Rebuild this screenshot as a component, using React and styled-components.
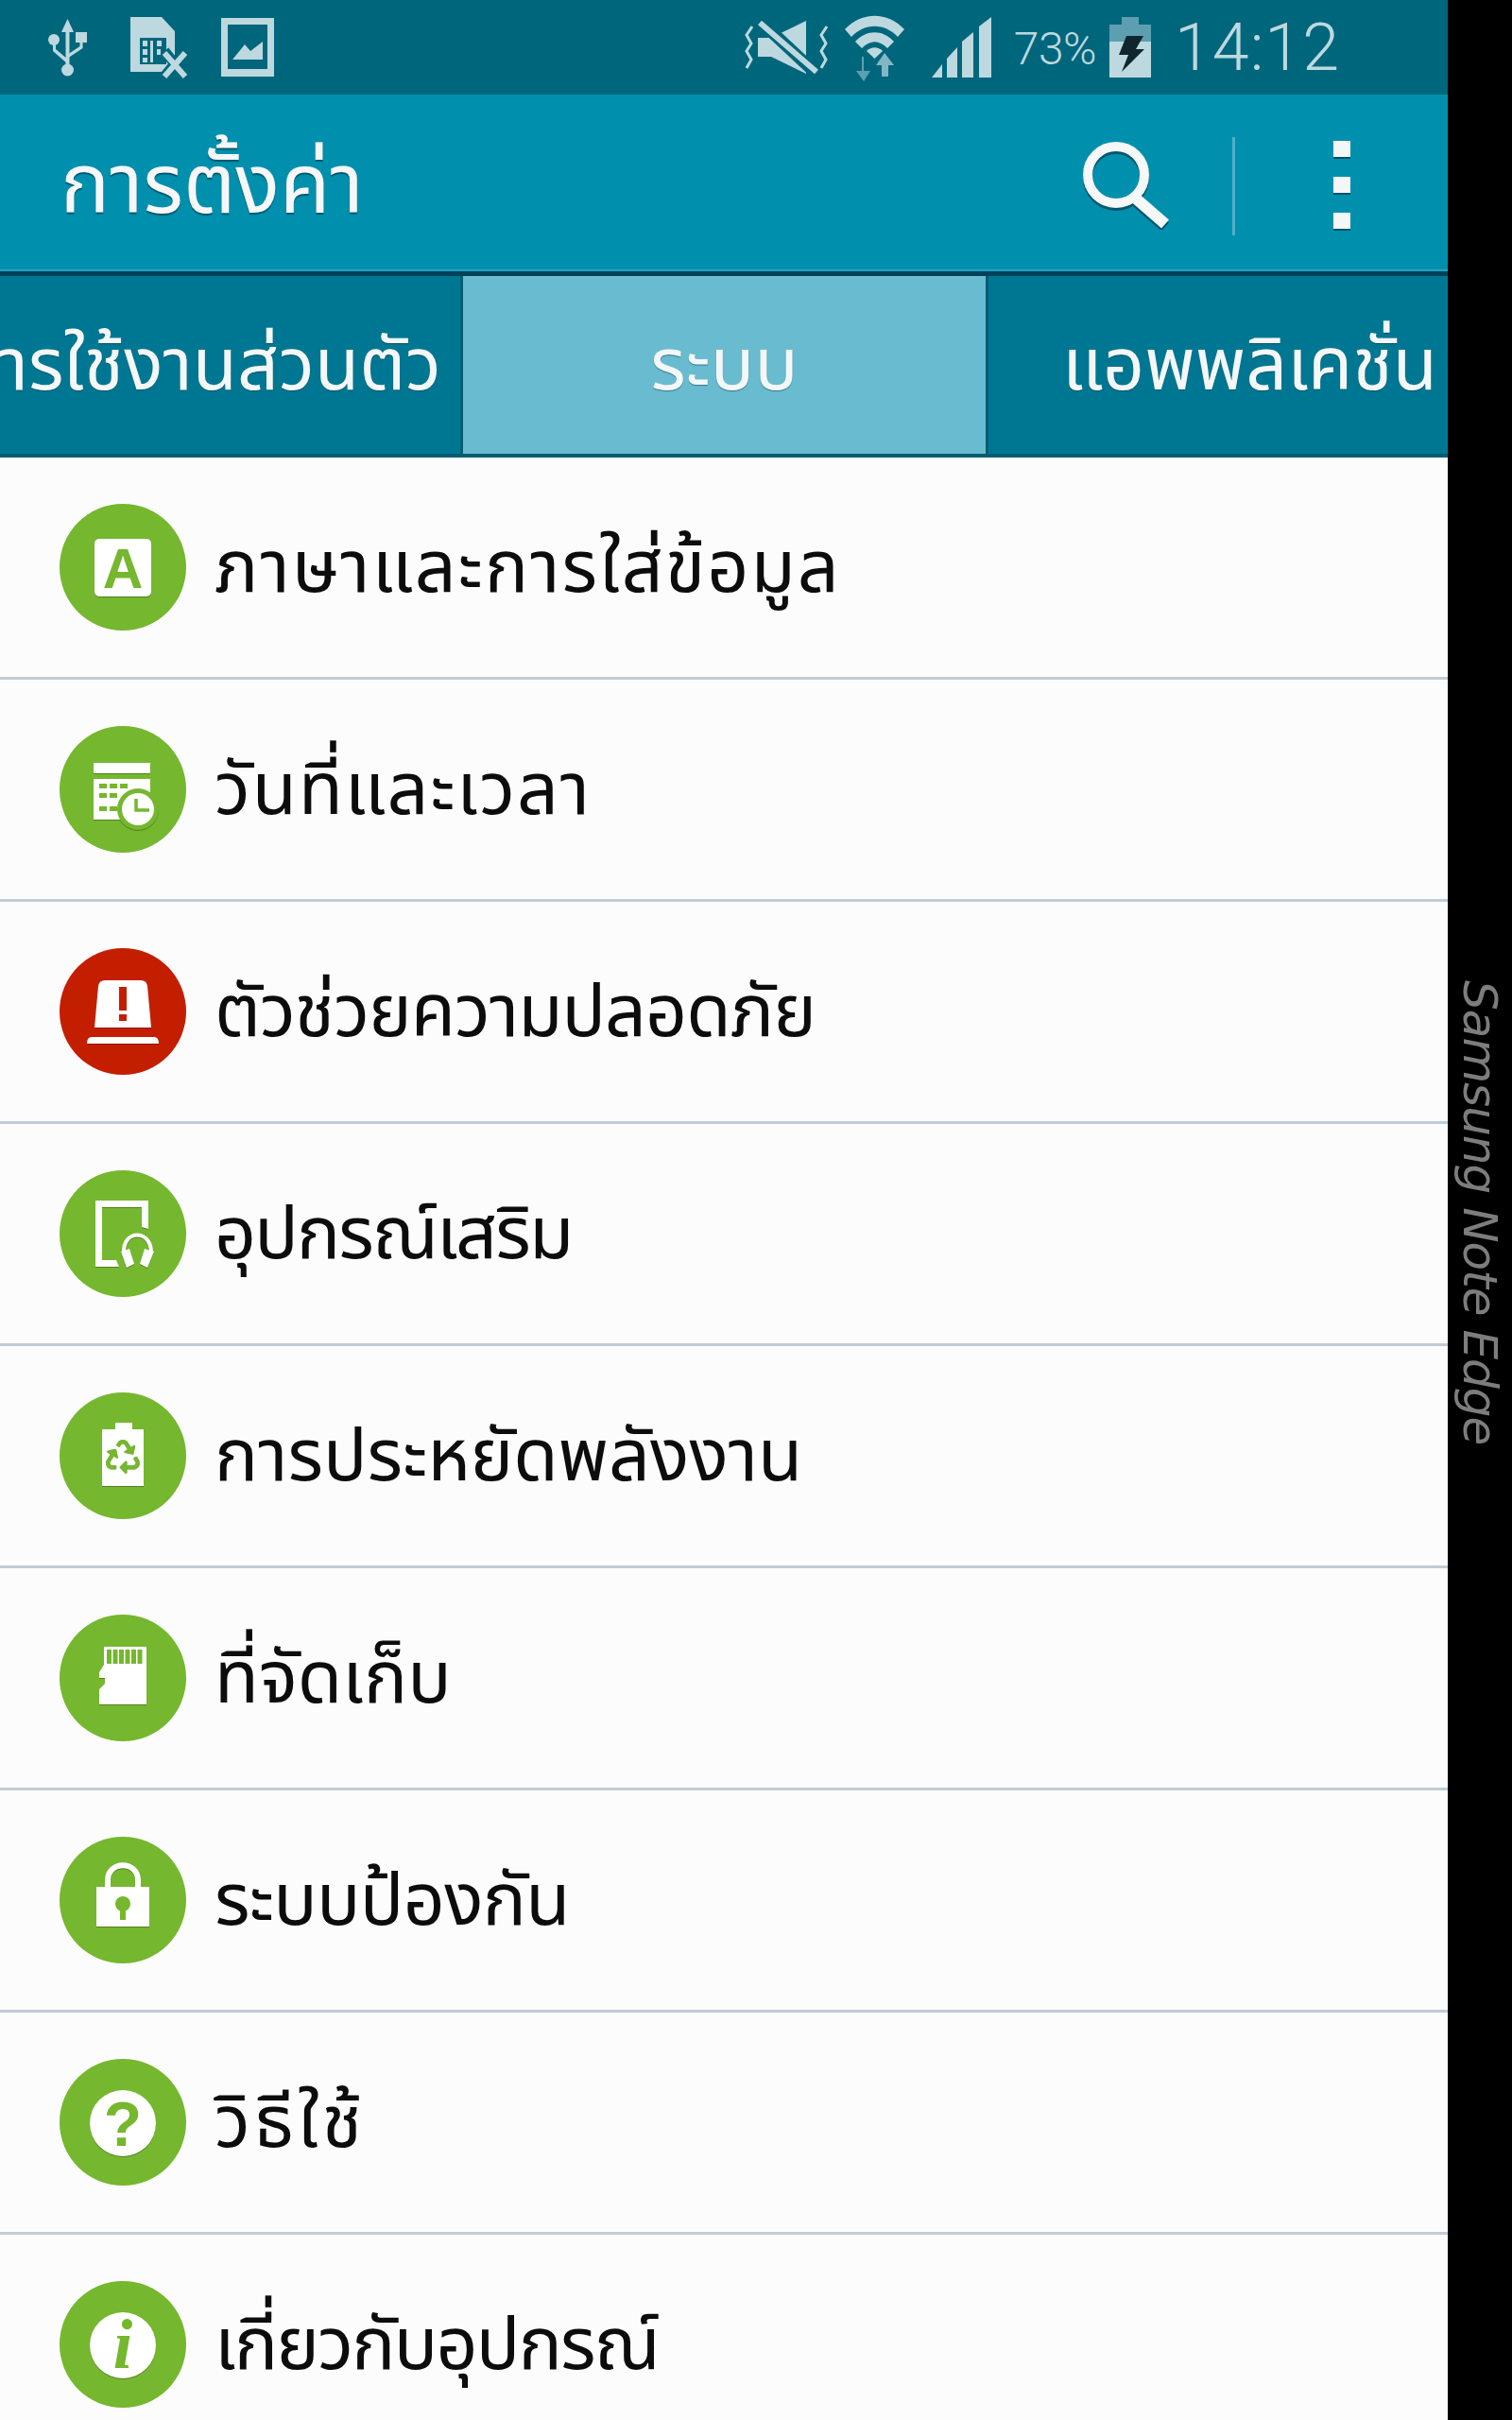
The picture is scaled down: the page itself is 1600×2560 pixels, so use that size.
import React from 'react'
import styled, { createGlobalStyle } from 'styled-components'
import { FaRecycle } from 'react-icons/fa'

const GlobalStyle = createGlobalStyle`
  html, body {
    margin: 0;
    padding: 0;
    background: #000;
  }
`

const THAI = `'Noto Sans Thai', 'Noto Sans', 'DejaVu Sans', sans-serif`
const LIGHT = '#bdd8df'
const STATUS_BG = '#00667c'
const BAR_BG = '#0090ae'
const TAB_BG = '#007792'
const GREEN = '#75b72e'
const RED = '#c41e00'

const Screen = styled.div`
  width: 1600px;
  height: 2560px;
  display: flex;
  overflow: hidden;
  background: #000;
`

const Phone = styled.main`
  width: 1532px;
  display: flex;
  flex-direction: column;
  background: #fcfcfc;
`

const StatusBar = styled.header`
  height: 100px;
  flex: none;
  display: flex;
  align-items: center;
  background: ${STATUS_BG};
  padding: 0 114px 0 51px;
  box-sizing: border-box;
`

const StatusLeft = styled.div`
  display: flex;
  align-items: center;
`

const StatusRight = styled.div`
  display: flex;
  align-items: center;
  margin-left: auto;
`

const Spacer = styled.span`
  width: ${p => p.$width}px;
`

const Percent = styled.span`
  font: 300 48px/1 Roboto, sans-serif;
  letter-spacing: -0.5px;
  color: ${LIGHT};
  margin: 4px 14px 0 24px;
`

const Clock = styled.span`
  font: 300 70px/1 Roboto, sans-serif;
  letter-spacing: 1px;
  color: ${LIGHT};
  margin-left: 25px;
`

const ActionBar = styled.div`
  height: 192px;
  flex: none;
  display: flex;
  align-items: center;
  box-sizing: border-box;
  background: ${BAR_BG};
  border-bottom: 5px solid #00415a;
  box-shadow: inset 0 -2px 0 #26a3bf;
  padding: 6px 103px 0 64px;
`

const Title = styled.h1`
  margin: 4px 0 0;
  font: 400 87px/1 ${THAI};
  color: #f5f7f8;
  text-shadow: 0 2px 1px rgba(0, 50, 65, 0.6);
`

const Actions = styled.div`
  margin-left: auto;
  display: flex;
  align-items: center;
`

const ActionDivider = styled.span`
  width: 3px;
  height: 104px;
  background: #4fb0c7;
  margin: 0 104px 0 67px;
`

const Dots = styled.div`
  display: flex;
  flex-direction: column;
  gap: 19px;
`

const Dot = styled.span`
  width: 18px;
  height: 17px;
  background: #f4f6f7;
  border-bottom: 2px solid #00536a;
`

const Tabs = styled.nav`
  height: 192px;
  flex: none;
  display: flex;
  background: ${TAB_BG};
  overflow: hidden;
`

const Tab = styled.div`
  width: ${p => p.$width}px;
  flex: none;
  box-sizing: border-box;
  display: flex;
  align-items: center;
  justify-content: ${p => p.$align};
  overflow: hidden;
  white-space: nowrap;
  font: 400 77px/1 ${THAI};
  color: #f3f7f8;
  text-shadow: 0 1px 1px rgba(0, 50, 65, 0.5);
  background: ${p => (p.$active ? '#69bccf' : TAB_BG)};
  border-bottom: 4px solid #005d72;
  padding: ${p => p.$padding};
  border-left: ${p => (p.$active ? '3px solid #005d72' : '0')};
  border-right: ${p => (p.$active ? '3px solid #005d72' : '0')};
`

const List = styled.ul`
  list-style: none;
  margin: 0;
  padding: 0;
`

const Row = styled.li`
  height: 235px;
  box-sizing: border-box;
  display: flex;
  align-items: center;
  gap: 30px;
  padding-left: 63px;
  border-bottom: 3px solid #c0ccd6;
`

const Badge = styled.span`
  width: 134px;
  height: 134px;
  flex: none;
  border-radius: 50%;
  background: ${p => (p.$alert ? RED : GREEN)};
  display: block;

  svg {
    display: block;
    filter: drop-shadow(0 1px 0 rgba(0, 0, 0, 0.3));
  }
`

const Label = styled.span`
  font: 400 77px/1 ${THAI};
  letter-spacing: ${p => p.$tracking}px;
  color: #0c0c0c;
  padding-top: 4px;
`

const Edge = styled.aside`
  flex: 1;
  padding-top: 1037px;
  display: flex;
  justify-content: center;
`

const EdgeText = styled.span`
  writing-mode: vertical-rl;
  font: italic 300 50px/1 'DejaVu Sans', sans-serif;
  letter-spacing: -1px;
  color: #7d7d7d;
  height: 486px;
  white-space: nowrap;
`

const UsbIcon = () => (
  <svg width="41" height="61" viewBox="0 0 41 61" fill={LIGHT}>
    <path d="M20.5 0 27 14H22.5V48H18.5V14H14Z" />
    <circle cx="20.5" cy="54" r="6.5" />
    <circle cx="6" cy="22" r="6" />
    <rect x="29" y="14" width="12" height="11" />
    <path d="M5 26H8V32L21 43V48L5 34Z" />
    <path d="M33.5 24H36.5V31L20 42V38L33.5 29Z" />
  </svg>
)

const SimOffIcon = () => (
  <svg width="61" height="65" viewBox="0 0 61 65">
    <path d="M0 0H33L47 15V58H0Z" fill={LIGHT} />
    <rect x="10" y="22" width="28" height="28" fill={STATUS_BG} />
    <g fill={LIGHT}>
      <rect x="13" y="25" width="5" height="6" />
      <rect x="13" y="34" width="5" height="6" />
      <rect x="13" y="43" width="5" height="5" />
      <rect x="21" y="25" width="3" height="23" />
      <rect x="28" y="25" width="5" height="6" />
      <rect x="28" y="34" width="4" height="6" />
    </g>
    <path d="M36 36 58 63M58 36 36 63" stroke={STATUS_BG} strokeWidth="11" />
    <path d="M36 38 58 63M58 38 36 63" stroke={LIGHT} strokeWidth="6" />
  </svg>
)

const ImageIcon = () => (
  <svg width="56" height="62" viewBox="0 0 56 62">
    <rect width="56" height="62" fill={LIGHT} />
    <rect x="7" y="7" width="42" height="47" fill={STATUS_BG} />
    <path d="M12 44 25 28 31 35 44 25V44Z" fill={LIGHT} />
  </svg>
)

const VibrateIcon = () => (
  <svg width="91" height="60" viewBox="0 0 91 60" fill="none">
    <path d="M8 8 2 17 7 26 2 34 7 43 2 52" stroke={LIGHT} strokeWidth="3" />
    <path d="M87 8 81 17 86 26 81 34 86 43 81 52" stroke={LIGHT} strokeWidth="3" />
    <path d="M14 20H28L65 2V58L28 40H14Z" fill={LIGHT} />
    <path d="M16 2 76 58" stroke={STATUS_BG} strokeWidth="13" />
    <path d="M16 4 76 56" stroke={LIGHT} strokeWidth="6" />
  </svg>
)

const WifiIcon = () => (
  <svg width="67" height="71" viewBox="0 0 67 71" fill="none">
    <path d="M2 16C20-3 47-3 65 16L58 24C44 9 23 9 9 24Z" fill={LIGHT} />
    <path d="M13 29C25 16 42 16 54 29L47 36C38 27 29 27 20 36Z" fill={LIGHT} />
    <path d="M25 39C30 34 37 34 42 39L33.500 47Z" fill={LIGHT} />
    <path d="M22 45V60H29L22 71 14 60H20V45Z" fill="#5d9fb0" />
    <path d="M44 41 54 54H48V66H41V54H35Z" fill="#83b6c4" />
  </svg>
)

const SignalIcon = () => (
  <svg width="63" height="64" viewBox="0 0 63 64" fill={LIGHT}>
    <path d="M0 64 11 50V64Z" />
    <path d="M16 64V44L27 32V64Z" />
    <path d="M32 64V26L44 16V64Z" />
    <path d="M50 64V10L63 0V64Z" />
  </svg>
)

const BatteryIcon = () => (
  <svg width="44" height="64" viewBox="0 0 44 64">
    <rect x="13" width="18" height="8" fill="#5d9fb0" />
    <rect y="8" width="44" height="18" fill="#5d9fb0" />
    <rect y="26" width="44" height="38" fill={LIGHT} />
    <path d="M18 20H36L28 34H37L13 58 20 40H10Z" fill="#10262f" />
  </svg>
)

const SearchIcon = () => (
  <svg width="91" height="93" viewBox="0 0 91 93" fill="none">
    <g stroke="#00566c" transform="translate(0 3)">
      <ellipse cx="35" cy="35" rx="30" ry="30" strokeWidth="10" />
      <path d="M56 60 87 87" strokeWidth="12" />
    </g>
    <ellipse cx="35" cy="35" rx="30" ry="30" stroke="#f5f7f8" strokeWidth="10" />
    <path d="M56 60 87 87" stroke="#f5f7f8" strokeWidth="12" />
  </svg>
)

const Glyph = styled.text`
  font-family: ${p => p.$family};
  font-size: ${p => p.$size}px;
  font-weight: 700;
  font-style: ${p => p.$style || 'normal'};
  fill: ${GREEN};
  text-anchor: middle;
`

const iconProps = { width: 134, height: 134, viewBox: '0 0 134 134', fill: '#fff' }

const LanguageIcon = () => (
  <svg {...iconProps}>
    <rect x="37" y="37" width="60" height="61" rx="5" />
    <Glyph x="67" y="89" $size="59" $family="'Liberation Sans', sans-serif">A</Glyph>
  </svg>
)

const CalendarIcon = () => (
  <svg {...iconProps}>
    <rect x="36" y="39" width="60" height="11" />
    <rect x="36" y="56" width="60" height="43" />
    <g fill={GREEN}>
      <rect x="42" y="61" width="8" height="5" />
      <rect x="53" y="61" width="8" height="5" />
      <rect x="64" y="61" width="8" height="5" />
      <rect x="42" y="71" width="8" height="5" />
      <rect x="53" y="71" width="8" height="5" />
      <rect x="42" y="85" width="8" height="5" />
      <rect x="53" y="85" width="8" height="5" />
      <circle cx="83" cy="88" r="22" />
    </g>
    <circle cx="83" cy="88" r="17" />
    <path d="M81 77V89H95" fill="none" stroke={GREEN} strokeWidth="3.500" />
  </svg>
)

const AlertIcon = () => (
  <svg {...iconProps}>
    <path d="M37 84 41 40Q42 34 48 34H86Q92 34 93 40L97 84Z" />
    <rect x="63" y="41" width="8" height="25" fill={RED} />
    <rect x="63" y="70" width="8" height="7" fill={RED} />
    <path d="M29 101Q29 94 34 94H100Q105 94 105 101Z" />
  </svg>
)

const AccessoryIcon = () => (
  <svg {...iconProps}>
    <path d="M38 32H94V62L87 60V39H45V95H60L63 102H38Z" />
    <path d="M68 88C66 62 98 62 97 88" fill="none" stroke="#fff" strokeWidth="4" />
    <path d="M65 86 74 83 79 99 71 103Z" />
    <path d="M90 83 100 86 93 103 85 99Z" />
  </svg>
)

const PowerIcon = () => (
  <svg {...iconProps}>
    <rect x="59" y="32" width="18" height="8" />
    <rect x="45" y="39" width="44" height="60" />
    <FaRecycle x="49" y="50" size={36} fill={GREEN} />
  </svg>
)

const StorageIcon = () => (
  <svg {...iconProps}>
    <path d="M47 34H92V95H42V79L48 73V67H42V61L47 53Z" />
    <g fill={GREEN}>
      {[50, 56.500, 63, 69.500, 76, 82.500].map(x => (
        <rect key={x} x={x} y="37" width="5" height="15" />
      ))}
    </g>
  </svg>
)

const LockIcon = () => (
  <svg {...iconProps}>
    <path d="M51 55V46C51 25 83 25 83 46V55" fill="none" stroke="#fff" strokeWidth="6" />
    <rect x="39" y="53" width="56" height="42" />
    <circle cx="67" cy="71" r="8" fill={GREEN} />
    <rect x="64" y="72" width="6" height="16" fill={GREEN} />
  </svg>
)

const HelpIcon = () => (
  <svg {...iconProps}>
    <circle cx="67" cy="68" r="35" />
    <Glyph x="67" y="92" $size="66" $family="'Liberation Sans', sans-serif">?</Glyph>
  </svg>
)

const InfoIcon = () => (
  <svg {...iconProps}>
    <circle cx="67" cy="68" r="35" />
    <Glyph x="67" y="92" $size="74" $style="italic" $family="'Liberation Serif', serif">i</Glyph>
  </svg>
)

const rows = [
  { label: 'ภาษาและการใส่ข้อมูล', icon: LanguageIcon, tracking: 2.1 },
  { label: 'วันที่และเวลา', icon: CalendarIcon, tracking: 1.9 },
  { label: 'ตัวช่วยความปลอดภัย', icon: AlertIcon, alert: true, tracking: -1 },
  { label: 'อุปกรณ์เสริม', icon: AccessoryIcon, tracking: -1.9 },
  { label: 'การประหยัดพลังงาน', icon: PowerIcon, tracking: 0 },
  { label: 'ที่จัดเก็บ', icon: StorageIcon, tracking: 0 },
  { label: 'ระบบป้องกัน', icon: LockIcon, tracking: -0.7 },
  { label: 'วิธีใช้', icon: HelpIcon, tracking: 4.2 },
  { label: 'เกี่ยวกับอุปกรณ์', icon: InfoIcon, tracking: -1.8 },
]

const App = () => (
  <Screen>
    <GlobalStyle />
    <Phone>
      <StatusBar>
        <StatusLeft>
          <UsbIcon />
          <Spacer $width={46} />
          <SimOffIcon />
          <Spacer $width={35} />
          <ImageIcon />
        </StatusLeft>
        <StatusRight>
          <VibrateIcon />
          <Spacer $width={13} />
          <WifiIcon />
          <Spacer $width={27} />
          <SignalIcon />
          <Percent>73%</Percent>
          <BatteryIcon />
          <Clock>14:12</Clock>
        </StatusRight>
      </StatusBar>
      <ActionBar>
        <Title>การตั้งค่า</Title>
        <Actions>
          <SearchIcon />
          <ActionDivider />
          <Dots>
            <Dot />
            <Dot />
            <Dot />
          </Dots>
        </Actions>
      </ActionBar>
      <Tabs>
        <Tab $width={487} $align="flex-end" $padding="5px 20px 0 0">การใช้งานส่วนตัว</Tab>
        <Tab $width={559} $align="center" $padding="5px 0 0" $active>ระบบ</Tab>
        <Tab $width={486} $align="flex-start" $padding="5px 0 0 78px">แอพพลิเคชั่น</Tab>
      </Tabs>
      <List>
        {rows.map(({ label, icon: Icon, alert, tracking }) => (
          <Row key={label}>
            <Badge $alert={alert}>
              <Icon />
            </Badge>
            <Label $tracking={tracking}>{label}</Label>
          </Row>
        ))}
      </List>
    </Phone>
    <Edge>
      <EdgeText>Samsung Note Edge</EdgeText>
    </Edge>
  </Screen>
)

export default App
